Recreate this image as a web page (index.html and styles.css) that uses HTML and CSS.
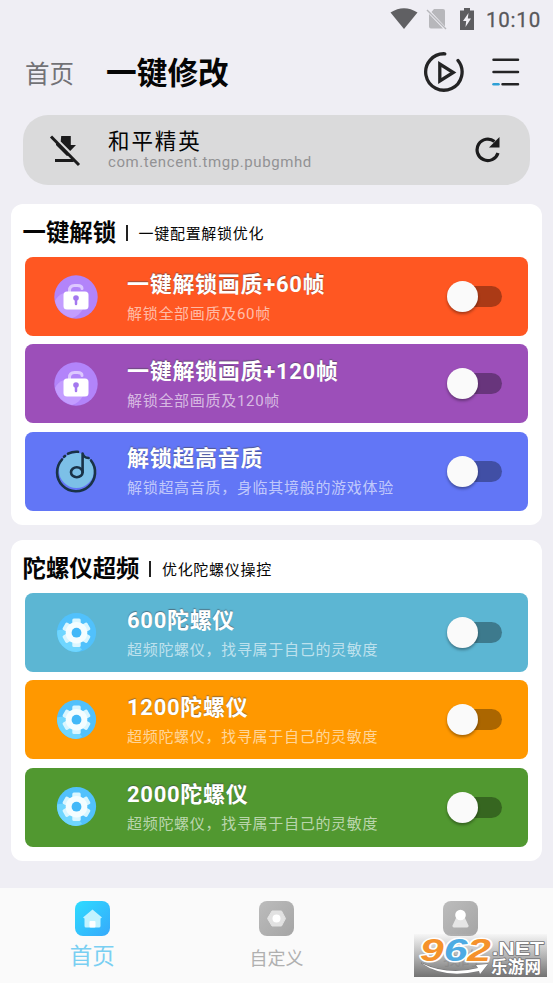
FILE: index.html
```html
<!DOCTYPE html>
<html lang="zh-CN">
<head>
<meta charset="utf-8">
<title>一键修改</title>
<link rel="stylesheet" href="styles.css">
</head>
<body>
<svg class="defs" width="0" height="0">
  <defs>
    <linearGradient id="blue" x1="0" y1="0" x2="1" y2="1"><stop offset="0" stop-color="#2edcff"/><stop offset="1" stop-color="#36a9fb"/></linearGradient>
    <linearGradient id="gray" x1="0" y1="0" x2="1" y2="1"><stop offset="0" stop-color="#bcbcbc"/><stop offset="1" stop-color="#a5a5a5"/></linearGradient>
    <symbol id="lock" viewBox="0 0 44 44">
      <circle cx="22" cy="22" r="21.7" fill="#b284fa"/>
      <path d="M1 26A15 15 0 0 1 10 18L29 34Q25 41 18 43A22 22 0 0 1 1 26Z" fill="#c39dff"/>
      <path d="M15.500 18v-2.500q0-5 5-5h3q4.500 0 4.500 3" fill="none" stroke="#ddc8ff" stroke-width="3" stroke-linecap="round"/>
      <rect x="9.500" y="16.500" width="25" height="18" rx="3.500" fill="#fff"/>
      <circle cx="22" cy="23" r="2.800" fill="#a478ef"/><path d="M22 24v5" stroke="#a478ef" stroke-width="2.500" stroke-linecap="round"/>
    </symbol>
    <symbol id="note" viewBox="0 0 44 44">
      <circle cx="22.500" cy="21.500" r="17.500" fill="#7cc0e7"/>
      <path d="M8 10.500A19 19 0 1 0 37 11.500M10 7.800l1-.8M14 4.600A19 19 0 0 1 24 2.800" fill="none" stroke="#193247" stroke-width="2.600" stroke-linecap="round"/>
      <ellipse cx="22.800" cy="23.300" rx="5.800" ry="5" fill="none" stroke="#193247" stroke-width="2.600"/>
      <path d="M28.600 23.300V4.500q1 4 6 4.500" fill="none" stroke="#193247" stroke-width="2.600" stroke-linejoin="round" stroke-linecap="round"/>
    </symbol>
    <symbol id="gear" viewBox="0 0 44 44">
      <circle cx="22.500" cy="21.500" r="19.600" fill="#51c1fc"/>
      <path d="M3.200 19.500Q8 18 11 20L28 38.500Q26 40.500 22 41A19.500 19.500 0 0 1 3.200 19.500Z" fill="#6fd6ff"/>
      <g fill="#d9f6ff">
        <rect x="18.300" y="7.500" width="8.400" height="28.500" rx="1.500"/>
        <rect x="18.300" y="7.500" width="8.400" height="28.500" rx="1.500" transform="rotate(60 22.500 21.700)"/>
        <rect x="18.300" y="7.500" width="8.400" height="28.500" rx="1.500" transform="rotate(120 22.500 21.700)"/>
      </g>
      <circle cx="22.500" cy="21.700" r="10.800" fill="#f4fdff"/>
      <circle cx="22.500" cy="21.700" r="4.900" fill="#42b8f8"/>
    </symbol>
  </defs>
</svg>
<main class="screen">
  <div class="status">
    <svg width="28" height="22" viewBox="0 0 28 22"><path d="M.5 4.500Q14-4 27.500 4.500L14 21Z" fill="#606063"/></svg>
    <svg class="sim" width="22" height="24" viewBox="0 0 22 24"><path d="M8 2h9q2 0 2 2v15.500L5.500 5ZM3 7l14 14.500H5q-2 0-2-2Z" fill="#b7b7bb"/><path d="M1 3l19 19" stroke="#b7b7bb" stroke-width="1.500"/></svg>
    <svg class="battery" width="16" height="24" viewBox="0 0 16 24"><path d="M1 3.500h4V1h6v2.500h4V23H1Z" fill="#5d5d60"/><path d="M9.500 6L4 14h3.200l-.7 6L12 11.500H8.800Z" fill="#f1f0f5"/></svg>
    <span class="time">10:10</span>
  </div>
  <header class="head">
    <span class="home">首页</span>
    <h1>一键修改</h1>
    <svg class="play" width="42" height="42" viewBox="0 0 42 42" fill="none" stroke="#242425" stroke-width="3.300" stroke-linecap="round"><path d="M21.800 2.800A18.200 18.200 0 1 0 35 9.500"/><path d="M16.800 13v17l13.500-8.500Z"/></svg>
    <svg width="28" height="30" viewBox="0 0 28 30" stroke-width="2.500" stroke-linecap="round"><path d="M1.500 2.700h24.500M1.500 15h24.500M10.500 27.300H26" stroke="#242425"/><path d="M1.500 27.300h5" stroke="#2e9fd5"/></svg>
  </header>
  <section class="app">
    <svg class="pin" width="34" height="34" viewBox="0 0 34 34"><path d="M13.200 3h9.600v9H28l-5.800 6L12.700 8.600ZM8 10l13 12-2 1L8 12ZM7 26h17l2 3H7Z" fill="#1b1b1c"/><path d="M3 3.500L31 32" stroke="#1b1b1c" stroke-width="3"/></svg>
    <div class="appname"><div class="name">和平精英</div><div class="pkg">com.tencent.tmgp.pubgmhd</div></div>
    <svg class="refresh" width="28" height="28" viewBox="0 0 28 28"><path d="M21.500 6.500A10.700 10.700 0 1 0 25 18" fill="none" stroke="#1b1b1c" stroke-width="3.200"/><path d="M26.500 2v10.500H16Z" fill="#1b1b1c"/></svg>
  </section>

  <section class="panel">
    <div class="title"><h2>一键解锁</h2><i></i><span>一键配置解锁优化</span></div>
    <div class="card red"><svg class="icon"><use href="#lock"/></svg><div class="text"><b>一键解锁画质+60帧</b><p>解锁全部画质及60帧</p></div><div class="switch"></div></div>
    <div class="card purple"><svg class="icon"><use href="#lock"/></svg><div class="text"><b>一键解锁画质+120帧</b><p>解锁全部画质及120帧</p></div><div class="switch"></div></div>
    <div class="card indigo"><svg class="icon"><use href="#note"/></svg><div class="text"><b>解锁超高音质</b><p>解锁超高音质，身临其境般的游戏体验</p></div><div class="switch"></div></div>
  </section>
  <section class="panel">
    <div class="title"><h2>陀螺仪超频</h2><i></i><span>优化陀螺仪操控</span></div>
    <div class="card cyan"><svg class="icon"><use href="#gear"/></svg><div class="text"><b>600陀螺仪</b><p>超频陀螺仪，找寻属于自己的灵敏度</p></div><div class="switch"></div></div>
    <div class="card orange"><svg class="icon"><use href="#gear"/></svg><div class="text"><b>1200陀螺仪</b><p>超频陀螺仪，找寻属于自己的灵敏度</p></div><div class="switch"></div></div>
    <div class="card green"><svg class="icon"><use href="#gear"/></svg><div class="text"><b>2000陀螺仪</b><p>超频陀螺仪，找寻属于自己的灵敏度</p></div><div class="switch"></div></div>
  </section>

  <nav class="nav">
    <div class="tab active"><svg width="35" height="35" viewBox="0 0 35 35"><rect width="35" height="35" rx="8" fill="url(#blue)"/><path d="M17.500 8.500L27 16.500l-1.500 1V25q0 1.500-1.500 1.500H11Q9.500 26.500 9.500 25v-7.500l-1.500-1Z" fill="#c2f3ff"/><rect x="14.500" y="20" width="6" height="6.500" rx="1" fill="#fff"/></svg><span>首页</span></div>
    <div class="tab"><svg width="35" height="35" viewBox="0 0 35 35"><rect width="35" height="35" rx="8" fill="url(#gray)"/><path d="M13 10h9.500l4 7.500-4 7.500H13L8.500 17.500Z" fill="#e2e2e2" stroke="#e2e2e2" stroke-linejoin="round"/><circle cx="17.500" cy="17.500" r="4" fill="#fff"/></svg><span>自定义</span></div>
    <div class="tab"><svg width="35" height="35" viewBox="0 0 35 35"><rect width="35" height="35" rx="8" fill="url(#gray)"/><path d="M13.500 16h8l4 8.500q.5 2-1.500 2H11q-2 0-1.500-2Z" fill="#e5e5e5"/><circle cx="17.500" cy="14" r="5.300" fill="#fff"/></svg><span>我的</span></div>
  </nav>
  <div class="mark">
    <svg width="133" height="44" viewBox="0 0 133 44">
      <g class="num" stroke="#fff" stroke-width="3" paint-order="stroke" stroke-linejoin="round">
        <text x="6" y="26.500" textLength="71" lengthAdjust="spacingAndGlyphs"><tspan fill="#f5922b">9</tspan><tspan fill="#4eabe3">6</tspan><tspan fill="#f5922b">2</tspan></text>
      </g>
      <g fill="#fff" stroke="#77777a" stroke-width="1.600" paint-order="stroke" stroke-linejoin="round">
        <text class="net" x="78" y="21" textLength="52" lengthAdjust="spacingAndGlyphs">.NET</text>
        <text class="cn" x="77" y="39" textLength="50">乐游网</text>
        <path d="M7 29Q34 42 64 34L62 31 74 30 66 40 65 37Q30 45 7 29Z" stroke-width="1"/>
      </g>
    </svg>
  </div>
</main>
</body>
</html>
```
FILE: styles.css
```css
* { box-sizing: border-box; margin: 0; padding: 0; }
body { background: #efeef4; font-family: Roboto, "Noto Sans CJK SC", sans-serif; color: #050505; }
svg { display: block; flex: none; }
.defs { position: absolute; }
.screen { position: relative; width: 553px; height: 983px; overflow: hidden; display: flex; flex-direction: column; }

.status { height: 37px; display: flex; align-items: center; justify-content: flex-end; padding-right: 12px; }
.status .sim { margin-left: 8px; }
.status .battery { margin: 0 11px 0 11px; }
.time { font-size: 20.500px; font-weight: 400; letter-spacing: .8px; color: #58585b; -webkit-text-stroke: .3px #58585b; line-height: 24px; margin-top: 2px; }

.head { height: 78px; display: flex; align-items: center; padding: 0 33px 8px 25px; }
.home { font-size: 24.500px; line-height: 36px; color: #727276; margin-top: 5px; }
h1 { font-size: 30.700px; line-height: 44px; font-weight: 700; margin-left: 32px; margin-top: 3px; }
.play { margin: 0 27px 0 auto; }

.app { height: 70px; margin: 0 23px; background: #dadadb; border-radius: 25px; display: flex; align-items: center; flex: none; }
.pin { margin-left: 25px; }
.appname { margin: 0 0 2px 26px; flex: 1; }
.name { font-size: 21.500px; line-height: 25px; letter-spacing: 1.900px; }
.pkg { font-size: 15px; line-height: 16px; color: #929294; letter-spacing: .58px; }
.refresh { margin: 0 29px 2px 0; }

.panel { height: 321px; flex: none; margin: 19px 11px 0; padding: 0 14px 14px; background: #fff; border-radius: 12px; }
.panel + .panel { margin-top: 15px; }
.title { height: 53px; margin-left: -2.500px; display: flex; align-items: center; padding-top: 4px; }
h2 { font-size: 23.400px; line-height: 34px; font-weight: 700; }
.title i { width: 1.500px; height: 16px; background: #222; margin: 0 11px 0 10px; }
.title span { font-size: 15px; line-height: 22px; letter-spacing: .7px; margin-top: 3px; }
.card { height: 79px; width: 502.500px; margin-bottom: 8.400px; border-radius: 8px; display: flex; align-items: center; color: #fff; }
.icon { width: 44px; height: 44px; margin-left: 29px; }
.text { margin-left: 29px; flex: 1; }
.text b { display: block; font-size: 22px; line-height: 30px; letter-spacing: .7px; font-weight: 700; padding-top: 1px; text-shadow: 0 -1px 1px rgba(70,70,80,.6); }
.text p { font-size: 15px; line-height: 22px; letter-spacing: .7px; margin-top: 3px; color: rgba(255,255,255,.62); white-space: nowrap; }
.switch { position: relative; width: 46px; height: 21px; border-radius: 11px; background: rgba(0,0,0,.33); margin-right: 25.500px; flex: none; }
.switch::before { content: ""; position: absolute; left: -9px; top: -5px; width: 31px; height: 31px; border-radius: 50%; background: #fafafa; box-shadow: 0 2px 3px rgba(0,0,0,.35); }
.red { background: #ff5722; }
.purple { background: #9c4fb9; }
.indigo { background: #6276f6; }
.cyan { background: #5cb6d3; }
.orange { background: #ff9800; }
.green { background: #519830; }

.nav { height: 95px; margin-top: auto; flex: none; background: #fafafa; display: grid; grid-template-columns: repeat(3, 1fr); justify-items: center; }
.tab { display: flex; flex-direction: column; align-items: center; padding-top: 13px; font-size: 18px; color: #b0b0b0; }
.tab span { line-height: 26px; margin-top: 10px; }
.active span { font-size: 22.500px; line-height: 32px; margin-top: 4px; color: #79cff2; }
.mark { position: absolute; left: 414px; top: 934px; width: 133px; height: 43px; background: linear-gradient(rgba(210,210,210,.1), rgba(150,150,150,.75) 55%, #737373); }
.num { font: italic 700 32px "Liberation Sans", sans-serif; }
.net { font: 700 19px "Liberation Sans", sans-serif; }
.cn { font: 700 16.500px "Noto Sans CJK SC", sans-serif; }
```
